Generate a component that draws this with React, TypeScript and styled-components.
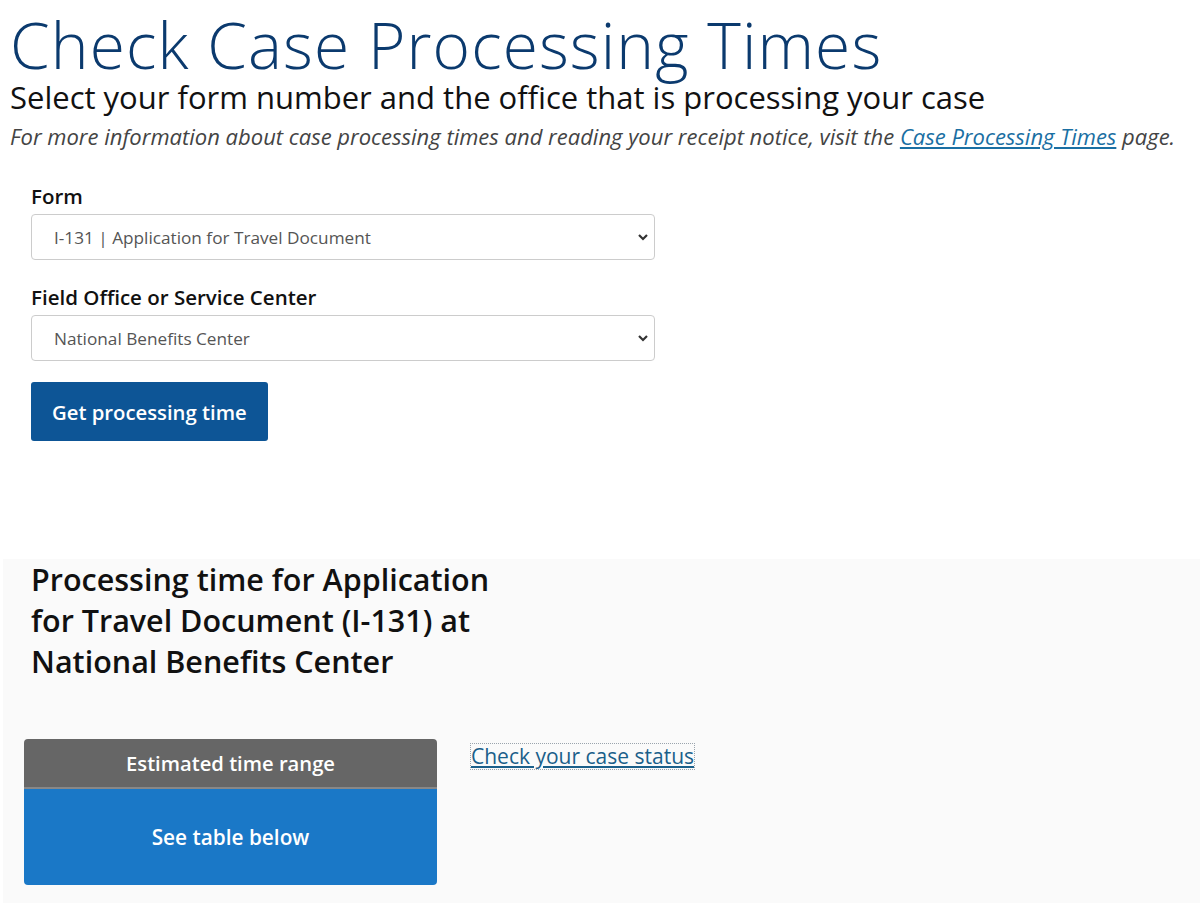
import React from "react";
import styled, { createGlobalStyle } from "styled-components";

const GlobalStyle = createGlobalStyle`
  body {
    margin: 0;
    background: #ffffff;
    font-family: "Open Sans", Lato, sans-serif;
    color: #111;
  }
`;

const Page = styled.div`
  width: 1200px;
  padding-top: 13px;
`;

const Header = styled.header`
  padding-left: 10px;
`;

const Title = styled.h1`
  margin: 0;
  font-size: 64px;
  font-weight: 300;
  line-height: 63px;
  letter-spacing: 1.1px;
  color: #0b3a6e;
`;

const Subtitle = styled.h2`
  margin: 0;
  font-size: 31px;
  font-weight: 400;
  line-height: 42px;
  color: #111;
`;

const Note = styled.p`
  margin: 0;
  font-size: 22px;
  font-style: italic;
  line-height: 36px;
  color: #444;

  a {
    color: #1a6fa3;
  }
`;

const Form = styled.form`
  width: 624px;
  margin: 29px 0 0 31px;
  display: flex;
  flex-direction: column;
`;

const Label = styled.label`
  font-size: 20.5px;
  font-weight: 600;
  line-height: 26px;
  color: #111;
  margin-bottom: 5px;
`;

const SelectWrap = styled.div`
  position: relative;
  margin-bottom: 24px;
`;

const Select = styled.select`
  appearance: none;
  width: 100%;
  height: 46px;
  padding: 0 40px 0 22px;
  border: 1px solid #cccccc;
  border-radius: 4px;
  background: #fff;
  font-family: "Open Sans", sans-serif;
  font-size: 17.2px;
  color: #555;
`;

const Chevron = styled.svg`
  position: absolute;
  right: 6px;
  top: 17px;
  width: 12px;
  height: 12px;
  pointer-events: none;
`;

const Submit = styled.button`
  align-self: flex-start;
  margin-top: -3px;
  height: 59px;
  padding: 0 21px;
  border: none;
  border-radius: 3px;
  background: #0d5596;
  color: #fff;
  font-family: "Open Sans", sans-serif;
  font-size: 20.3px;
  font-weight: 600;
`;

const Results = styled.section`
  margin: 118px 0 0 3px;
  background: #fafafa;
  padding: 0 0 18px;
`;

const ResultHeading = styled.h3`
  margin: 0 0 0 28px;
  width: 480px;
  font-size: 30.5px;
  font-weight: 600;
  line-height: 41px;
  color: #111;
`;

const ResultRow = styled.div`
  display: flex;
  align-items: flex-start;
  gap: 34px;
  margin: 57px 0 0 21px;
`;

const TimeCard = styled.div`
  width: 413px;
  border-radius: 4px;
  overflow: hidden;
`;

const CardHead = styled.div`
  height: 48px;
  background: #666666;
  border-bottom: 2px solid #888888;
  color: #fff;
  font-size: 20.2px;
  font-weight: 600;
  display: flex;
  align-items: center;
  justify-content: center;
`;

const CardBody = styled.div`
  height: 96px;
  background: #1a78c7;
  color: #fff;
  font-size: 20.8px;
  font-weight: 600;
  display: flex;
  align-items: center;
  justify-content: center;
`;

const StatusLink = styled.a`
  margin-top: 5px;
  font-size: 21px;
  line-height: 25px;
  color: #1a5f8a;
  text-decoration: underline;
  outline: 1px dotted #9aa4ad;
`;

const ChevronIcon = () => (
  <Chevron viewBox="0 0 12 12">
    <path d="M2 4l4 4 4-4" fill="none" stroke="#333" strokeWidth="2.2" />
  </Chevron>
);

export default function App() {
  return (
    <Page>
      <GlobalStyle />
      <Header>
        <Title>Check Case Processing Times</Title>
        <Subtitle>Select your form number and the office that is processing your case</Subtitle>
        <Note>
          For more information about case processing times and reading your receipt notice, visit the{" "}
          <a href="#">Case Processing Times</a> page.
        </Note>
      </Header>

      <Form onSubmit={(e) => e.preventDefault()}>
        <Label htmlFor="form">Form</Label>
        <SelectWrap>
          <Select id="form" defaultValue="i131">
            <option value="i131">I-131 | Application for Travel Document</option>
          </Select>
          <ChevronIcon />
        </SelectWrap>

        <Label htmlFor="office">Field Office or Service Center</Label>
        <SelectWrap>
          <Select id="office" defaultValue="nbc">
            <option value="nbc">National Benefits Center</option>
          </Select>
          <ChevronIcon />
        </SelectWrap>

        <Submit type="submit">Get processing time</Submit>
      </Form>

      <Results>
        <ResultHeading>
          Processing time for Application for Travel Document (I-131) at National Benefits Center
        </ResultHeading>
        <ResultRow>
          <TimeCard>
            <CardHead>Estimated time range</CardHead>
            <CardBody>See table below</CardBody>
          </TimeCard>
          <StatusLink href="#">Check your case status</StatusLink>
        </ResultRow>
      </Results>
    </Page>
  );
}
